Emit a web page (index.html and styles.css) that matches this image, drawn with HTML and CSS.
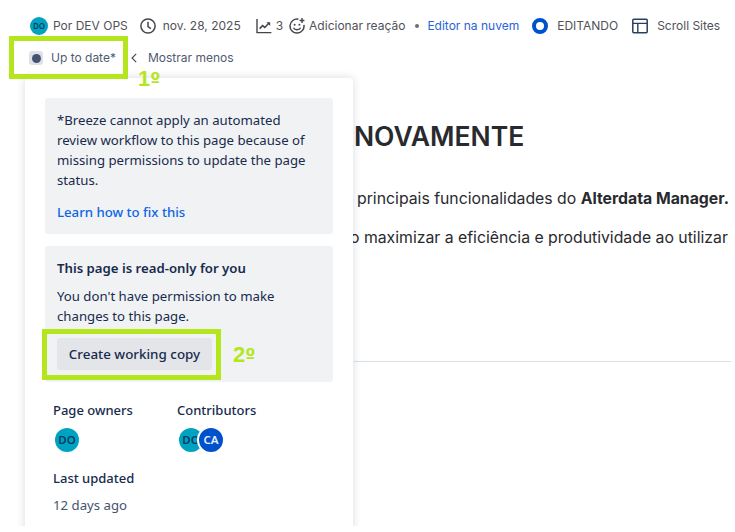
FILE: index.html
```html
<!DOCTYPE html>
<html lang="pt">
<head>
<meta charset="utf-8">
<title>Up to date</title>
<link rel="stylesheet" href="styles.css">
</head>
<body>
<div class="shot">
  <header class="byline">
    <span class="avatar avatar-tiny">DO</span>
    <span class="by">Por DEV OPS</span>
    <svg class="ico clock" viewBox="0 0 16 16"><circle cx="8" cy="8" r="7.1" fill="none" stroke="#44464c" stroke-width="1.5"/><path d="M8 3.8V8.6L10.9 10.6" fill="none" stroke="#44464c" stroke-width="1.5"/></svg>
    <span class="date">nov. 28, 2025</span>
    <svg class="ico chart" viewBox="0 0 16 16"><path d="M1 1V14.6H15.4" fill="none" stroke="#44464c" stroke-width="1.4"/><path d="M3.6 10.6L6.6 7.6L8.8 9.4L13 5" fill="none" stroke="#44464c" stroke-width="1.5"/><path d="M10.4 4.2H14.2V8Z" fill="#44464c"/></svg>
    <span class="views">3</span>
    <svg class="ico smile" viewBox="0 0 16 16"><path d="M9.4 1.2A7 7 0 1 0 14.9 6.8" fill="none" stroke="#44464c" stroke-width="1.5"/><circle cx="5.6" cy="6.8" r="1" fill="#44464c"/><circle cx="10.4" cy="6.8" r="1" fill="#44464c"/><path d="M4.4 9.8C5.6 12.4 10.4 12.4 11.6 9.8" fill="none" stroke="#44464c" stroke-width="1.4"/><path d="M13 0V5M10.6 2.5H15.4" fill="none" stroke="#44464c" stroke-width="1.4"/></svg>
    <span class="react">Adicionar reação</span>
    <span class="sep"></span>
    <a class="cloud">Editor na nuvem</a>
    <span class="ring"></span>
    <span class="editing">EDITANDO</span>
    <svg class="ico layout" viewBox="0 0 16 16"><rect x="0.8" y="1.2" width="14.4" height="13.6" rx="1" fill="none" stroke="#2c3e5d" stroke-width="1.5"/><path d="M1 5.4H15M5.8 5.4V14.6" fill="none" stroke="#2c3e5d" stroke-width="1.4"/></svg>
    <span class="sites">Scroll Sites</span>
  </header>

  <div class="status">
    <span class="state"><span class="state-dot"></span></span>
    <span class="state-label">Up to date*</span>
    <svg class="chev" viewBox="0 0 6 10"><path d="M5.2 0.8L1 5L5.2 9.2" fill="none" stroke="#44464c" stroke-width="1.1"/></svg>
    <span class="less">Mostrar menos</span>
  </div>

  <main class="article">
    <h1 class="title">NOVAMENTE</h1>
    <p class="para para-first">principais funcionalidades do <strong>Alterdata Manager.</strong></p>
    <p class="para para-second">o maximizar a eficiência e produtividade ao utilizar</p>
    <hr class="rule">
  </main>

  <aside class="panel">
    <section class="note">
      <p class="note-text">*Breeze cannot apply an automated review workflow to this page because of missing permissions to update the page status.</p>
      <a class="note-link">Learn how to fix this</a>
    </section>
    <section class="note note-second">
      <h2 class="note-title">This page is read-only for you</h2>
      <p class="note-text">You don't have permission to make changes to this page.</p>
      <button class="copy-btn">Create working copy</button>
    </section>
    <div class="people">
      <div class="people-col">
        <h3 class="label">Page owners</h3>
        <div class="avatars"><span class="avatar avatar-teal">DO</span></div>
      </div>
      <div class="people-col">
        <h3 class="label">Contributors</h3>
        <div class="avatars"><span class="avatar avatar-teal">DO</span><span class="avatar avatar-blue">CA</span></div>
      </div>
    </div>
    <h3 class="label label-updated">Last updated</h3>
    <p class="ago">12 days ago</p>
  </aside>

  <div class="mark mark-one"></div>
  <span class="mark-num num-one">1<span class="ord">º</span></span>
  <div class="mark mark-two"></div>
  <span class="mark-num num-two">2<span class="ord">º</span></span>
</div>
</body>
</html>
```

FILE: styles.css
```css
* { box-sizing: border-box; }
html, body { margin: 0; padding: 0; background: #fff; }
body { width: 735px; height: 532px; overflow: hidden; }

.shot {
  position: relative;
  width: 731px;
  height: 526px;
  overflow: hidden;
  background: #fff;
  font-family: Inter, "Liberation Sans", sans-serif;
}

/* top meta row */
.byline {
  display: flex;
  align-items: center;
  height: 18px;
  margin-top: 17px;
  padding-left: 30px;
  font-size: 12px;
  line-height: 18px;
  color: #505258;
  white-space: nowrap;
}
.ico { display: block; width: 16px; height: 16px; flex: none; }
.by { margin-left: 5px; }
.clock { margin-left: 12px; }
.date { margin-left: 7px; }
.chart { margin-left: 15px; }
.views { margin-left: 4px; }
.smile { margin-left: 6px; }
.react { margin-left: 4px; }
.sep { width: 4px; height: 4px; margin-left: 10px; border-radius: 50%; background: #6b6e76; }
.cloud { margin-left: 8px; color: #2a62d9; }
.ring { width: 16px; height: 16px; margin-left: 13px; border: 4px solid #0052cc; border-radius: 50%; }
.editing { margin-left: 9px; }
.layout { margin-left: 14px; }
.sites { margin-left: 9px; }

/* second row */
.status {
  display: flex;
  align-items: center;
  height: 18px;
  margin-top: 14px;
  padding-left: 29px;
  font-size: 12px;
  line-height: 18px;
  color: #505a70;
}
.state {
  display: flex;
  align-items: center;
  justify-content: center;
  width: 14px;
  height: 14px;
  border-radius: 3px;
  background: #dfe1e6;
}
.state-dot { width: 9px; height: 9px; border-radius: 50%; background: #44546f; }
.state-label { margin-left: 8px; }
.chev { width: 6px; height: 10px; margin-left: 15px; }
.less { margin-left: 11px; }

/* article under the popover */
.article { padding-left: 354px; color: #292a2e; }
.title { margin: 53px 0 0; font-size: 26.5px; line-height: 32px; font-weight: 600; white-space: nowrap; }
.para { margin: 0; font-size: 15.8px; line-height: 24px; white-space: nowrap; }
.para-first { margin-top: 35px; padding-left: 3px; }
.para-second { margin-top: 15px; margin-left: -4px; }
.para strong { font-weight: 700; }
.rule { margin: 111px 0 0; border: 0; border-top: 1px solid #dcdfe4; }

/* popover */
.panel {
  position: absolute;
  left: 25px;
  top: 78px;
  width: 328px;
  height: 470px;
  padding: 20px;
  border-radius: 4px;
  background: #fff;
  box-shadow: 0 0 8px rgba(9, 30, 66, 0.16);
  font-family: "Noto Sans", "Open Sans", sans-serif;
  font-size: 13.2px;
  line-height: 20px;
  color: #172b4d;
}
.note {
  height: 136px;
  padding: 12px;
  border-radius: 3px;
  background: #f1f2f4;
}
.note-second { margin-top: 12px; }
.note-text { margin: 0; }
.note-link { display: block; margin-top: 12px; font-weight: 500; color: #0c66e4; }
.note-title { margin: 0 0 8px; font-size: 13.2px; line-height: 20px; font-weight: 600; }
.copy-btn {
  display: block;
  width: 155px;
  height: 32px;
  margin-top: 12px;
  padding: 0;
  border: 0;
  border-radius: 3px;
  background: #e3e5e9;
  font: 500 13.4px/20px "Noto Sans", sans-serif;
  color: #172b4d;
}
.people { display: flex; margin-top: 18px; padding-left: 8px; }
.people-col { width: 124px; }
.label { margin: 0; font-size: 13px; line-height: 20px; font-weight: 500; }
.label-updated { margin-top: 16px; padding-left: 8px; }
.avatars { display: flex; margin-top: 8px; padding-left: 2px; }
.avatar {
  display: flex;
  align-items: center;
  justify-content: center;
  width: 24px;
  height: 24px;
  flex: none;
  border-radius: 50%;
  font-size: 11.5px;
  font-weight: 600;
  overflow: hidden;
}
.avatar-teal { background: #00a3bf; color: #0b3d66; }
.avatar-blue {
  width: 28px;
  height: 28px;
  margin: -2px 0 -2px -6px;
  border: 2px solid #fff;
  background: #0052cc;
  color: #e6efff;
}
.avatar-tiny {
  width: 18px;
  height: 18px;
  background: #00a3bf;
  color: #0b3d66;
  font-family: "Noto Sans", sans-serif;
  font-size: 8px;
}
.ago { margin: 7px 0 0; padding-left: 8px; color: #44546f; }

/* green annotations drawn over the capture */
.mark { position: absolute; border: 5px solid #b5e61d; }
.mark-one { left: 9px; top: 36px; width: 119px; height: 43px; }
.mark-two { left: 42px; top: 329px; width: 179px; height: 51px; }
.mark-num {
  position: absolute;
  font-family: "Liberation Sans", sans-serif;
  font-size: 22px;
  line-height: 24px;
  font-weight: 700;
  color: #b5e61d;
}
.ord { font-family: "DejaVu Sans", sans-serif; font-size: 18px; }
.num-one { left: 138px; top: 67px; }
.num-two { left: 233px; top: 343px; }
```
